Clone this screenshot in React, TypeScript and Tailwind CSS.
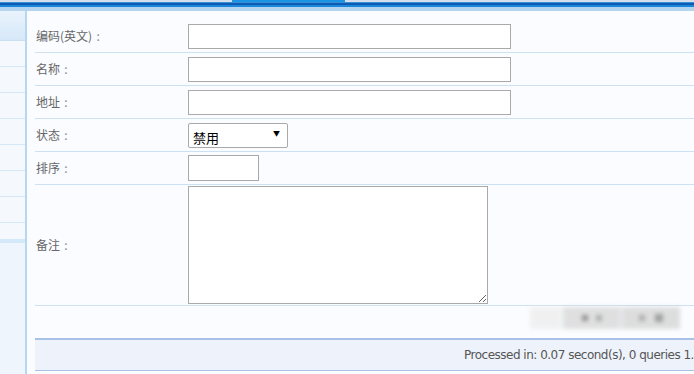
import React from "react";

const rowCls = "flex items-center border-b border-[#cce1f3]";
const labelCls = "w-[153px] shrink-0 pl-[1px] text-[12px] text-[#666] flex items-center";
const inputCls = "h-[25px] border border-[#a9a9a9] bg-white outline-none";

const SideItem = ({ first = false }: { first?: boolean }) => (
  <div
    className={
      first
        ? "h-[30px] border-b border-[#c9dff2] bg-gradient-to-b from-[#eaf3fc] to-[#d6e8f8]"
        : "h-[26px] border-b border-[#d6e7f5] bg-[#f5f9fe]"
    }
  />
);

const Label = ({ text }: { text: string }) => (
  <span className={labelCls}>
    {text}
    <span className="inline-block w-[12px] text-center text-[#888]">:</span>
  </span>
);

const App = () => {
  return (
    <div
      className="w-[694px] h-[374px] overflow-hidden flex flex-col bg-[#fafcff]"
      style={{ fontFamily: '"Noto Sans CJK SC", "Noto Sans", sans-serif' }}
    >
      {/* top tab strip */}
      <div className="h-[11px] shrink-0 flex flex-col">
        <div className="h-[2px] flex bg-[#d5e0ec]">
          <div className="w-[232px]" />
          <div className="w-[113px] bg-[#1b93e4]" />
        </div>
        <div className="h-[1px] bg-[#3a90d8]" />
        <div className="h-[2px] bg-[#0c5db2]" />
        <div className="h-[2px] bg-[#1a86dc]" />
        <div className="h-[4px] bg-[#b3d5f0]" />
      </div>

      <div className="flex flex-1 min-h-0">
        {/* sidebar */}
        <div className="w-[27px] shrink-0 border-r-2 border-[#b5d7ef] bg-[#eef5fd] flex flex-col">
          <SideItem first />
          <SideItem />
          <SideItem />
          <SideItem />
          <SideItem />
          <SideItem />
          <SideItem />
          <SideItem />
          <div className="h-[16px] bg-[#f5f9fe]" />
          <div className="h-[4px] bg-[#d3e8f8]" />
        </div>

        {/* content */}
        <div className="relative flex-1 pl-[8px] pt-[9px] flex flex-col">
          <div className={`${rowCls} h-[33px]`}>
            <Label text="编码(英文)" />
            <input className={`${inputCls} w-[323px]`} />
          </div>
          <div className={`${rowCls} h-[33px]`}>
            <Label text="名称" />
            <input className={`${inputCls} w-[323px]`} />
          </div>
          <div className={`${rowCls} h-[33px]`}>
            <Label text="地址" />
            <input className={`${inputCls} w-[323px]`} />
          </div>
          <div className={`${rowCls} h-[33px]`}>
            <Label text="状态" />
            <div className="relative w-[100px] h-[25px] rounded-[2px] border border-[#a9a9a9] bg-white">
              <select className="w-full h-full appearance-none bg-transparent pl-[4px] text-[13px] text-black outline-none">
                <option>禁用</option>
                <option>启用</option>
              </select>
              <span className="pointer-events-none absolute right-[7px] top-[6px] text-[7px] leading-none text-black">
                ▼
              </span>
            </div>
          </div>
          <div className={`${rowCls} h-[33px]`}>
            <Label text="排序" />
            <input className={`${inputCls} w-[71px] h-[26px]`} />
          </div>
          <div className={`${rowCls} h-[121px]`}>
            <Label text="备注" />
            <textarea className="w-[300px] h-[118px] border border-[#a9a9a9] bg-white outline-none" />
          </div>
          <div className="h-[32px]" />
          <div className="h-[33px] border-t-2 border-b border-t-[#a8c2e7] border-b-[#a8c2e7] bg-[#eef3fb] flex items-center overflow-hidden">
            <span
              className="pl-[429px] whitespace-nowrap text-[12px] text-[#555]"
              style={{ fontFamily: '"DejaVu Sans", sans-serif', letterSpacing: "-0.5px" }}
            >
              Processed in: 0.07 second(s), 0 queries 1.2 MB
            </span>
          </div>

          {/* blurred watermark */}
          <div className="pointer-events-none absolute left-[503px] top-[296px] flex gap-[1px] blur-[2px] opacity-80">
            <div className="w-[32px] h-[22px] bg-[#eeeeee]" />
            <div className="w-[58px] h-[22px] bg-[#d9d9d9] flex items-center justify-center gap-[8px]">
              <div className="w-[6px] h-[6px] bg-[#777]" />
              <div className="w-[6px] h-[6px] bg-[#999]" />
            </div>
            <div className="w-[58px] h-[22px] bg-[#d6d6d6] flex items-center justify-center gap-[10px]">
              <div className="w-[6px] h-[6px] bg-[#999]" />
              <div className="w-[8px] h-[8px] bg-[#888]" />
            </div>
          </div>
        </div>
      </div>
    </div>
  );
};

export default App;
